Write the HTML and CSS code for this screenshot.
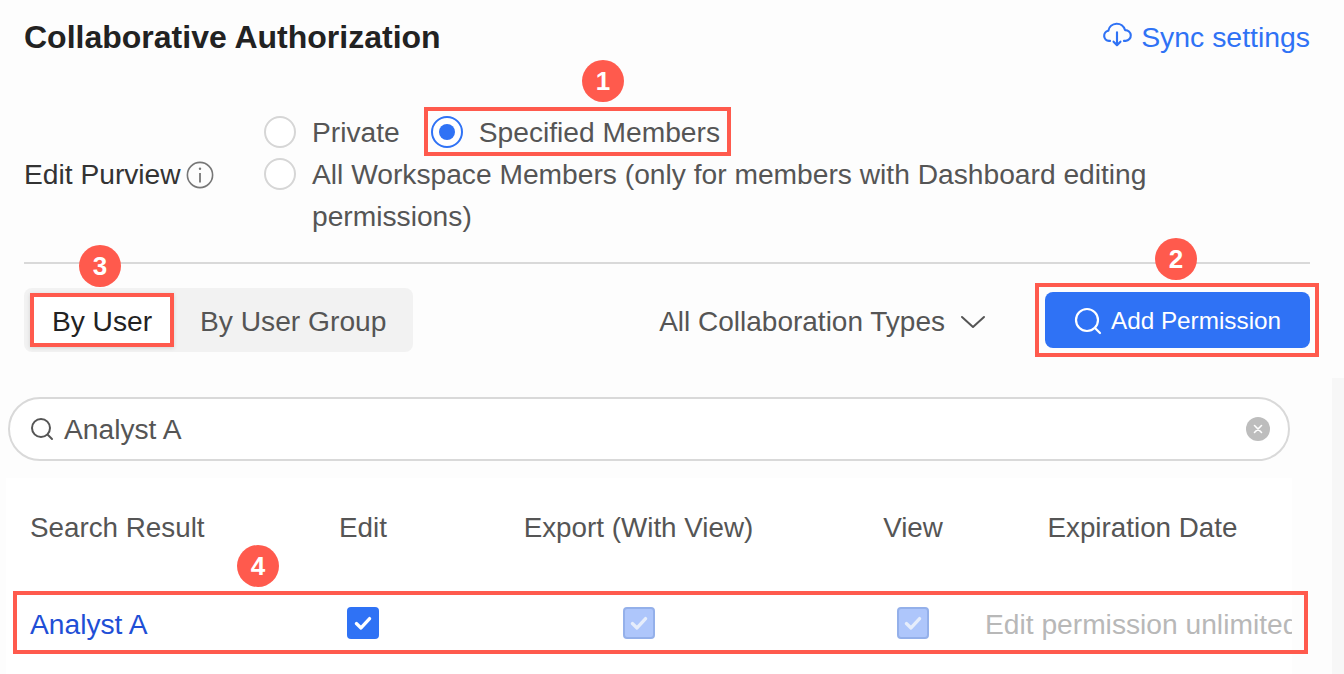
FILE: index.html
```html
<!DOCTYPE html>
<html lang="en">
<head>
<meta charset="utf-8">
<title>Collaborative Authorization</title>
<link rel="stylesheet" href="styles.css">
</head>
<body>
<main class="page">
  <header class="head">
    <h1 class="title">Collaborative Authorization</h1>
    <a class="sync">
      <svg class="sync-icon" viewBox="0 0 28 24" fill="none" stroke="#2f72f5" stroke-width="2" stroke-linecap="round" stroke-linejoin="round"><path d="M7.5 17.5H6.5a4.8 4.8 0 0 1-.6-9.5 8 8 0 0 1 15.6-.6 5 5 0 0 1 .6 10.1h-1.6"/><path d="M14 9.5v12M10.8 18.2l3.2 3.4 3.2-3.4"/></svg>
      Sync settings
    </a>
  </header>

  <section class="purview">
    <div class="purview-label">Edit Purview
      <svg class="info" viewBox="0 0 28 28" fill="none" stroke="#777" stroke-width="1.6"><circle cx="14" cy="14" r="12.6"/><path d="M14 12v9.5" stroke-width="1.8"/><circle cx="14" cy="7.8" r="1.2" fill="#777" stroke="none"/></svg>
    </div>
    <div class="options">
      <div class="opt-row">
        <span class="radio"></span><span class="opt-text">Private</span>
        <span class="radio on"></span><span class="opt-text">Specified Members</span>
      </div>
      <div class="opt-row wrap">
        <span class="radio"></span>
        <span class="opt-text long">All Workspace Members (only for members with Dashboard editing permissions)</span>
      </div>
    </div>
  </section>

  <hr class="rule">

  <section class="toolbar">
    <div class="tabs">
      <span class="tab active">By User</span>
      <span class="tab">By User Group</span>
    </div>
    <div class="types">All Collaboration Types
      <svg class="chev" viewBox="0 0 26 14" fill="none" stroke="#555" stroke-width="2" stroke-linecap="round" stroke-linejoin="round"><path d="M2 2l11 10L24 2"/></svg>
    </div>
    <button class="add">
      <svg class="add-icon" viewBox="0 0 28 28" fill="none" stroke="#fff" stroke-width="2.2" stroke-linecap="round"><circle cx="13" cy="13" r="11"/><path d="M21 21l5 5"/></svg>
      Add Permission
    </button>
  </section>

  <div class="search">
    <svg class="search-icon" viewBox="0 0 24 24" fill="none" stroke="#555" stroke-width="2" stroke-linecap="round"><circle cx="11" cy="11" r="9"/><path d="M18 18l4 4"/></svg>
    <span class="search-text">Analyst A</span>
    <span class="clear"><svg viewBox="0 0 10 10" stroke="#fff" stroke-width="1.6" stroke-linecap="round"><path d="M1.5 1.5l7 7M8.5 1.5l-7 7"/></svg></span>
  </div>

  <section class="table">
    <div class="grid grid-head">
      <span>Search Result</span>
      <span class="mid">Edit</span>
      <span class="mid">Export (With View)</span>
      <span class="mid view-col">View</span>
      <span class="mid exp-head">Expiration Date</span>
    </div>
    <div class="grid grid-row">
      <span class="name">Analyst A</span>
      <span class="mid"><span class="check"><svg viewBox="0 0 20 20" fill="none" stroke="#fff" stroke-width="3" stroke-linecap="round" stroke-linejoin="round"><path d="M4 10.5l4.2 4L16 6"/></svg></span></span>
      <span class="mid"><span class="check off"><svg viewBox="0 0 20 20" fill="none" stroke="#e6edfb" stroke-width="3" stroke-linecap="round" stroke-linejoin="round"><path d="M4 10.5l4.2 4L16 6"/></svg></span></span>
      <span class="mid view-col"><span class="check off"><svg viewBox="0 0 20 20" fill="none" stroke="#e6edfb" stroke-width="3" stroke-linecap="round" stroke-linejoin="round"><path d="M4 10.5l4.2 4L16 6"/></svg></span></span>
      <span class="expiry">Edit permission unlimited</span>
    </div>
  </section>
</main>

<div class="scroll-strip"></div>

<div class="mark mark-1"></div>
<div class="mark mark-2"></div>
<div class="mark mark-3"></div>
<div class="mark mark-4"></div>
<span class="badge badge-1">1</span>
<span class="badge badge-2">2</span>
<span class="badge badge-3">3</span>
<span class="badge badge-4">4</span>
</body>
</html>
```

FILE: styles.css
```css
* { box-sizing: border-box; }
html, body { margin: 0; height: 100%; }
body {
  background: #fdfdfd;
  font-family: "Liberation Sans", Arial, sans-serif;
  font-size: 28.2px;
  color: #555;
  overflow: hidden;
  position: relative;
}
.page { display: flex; flex-direction: column; width: 1344px; height: 674px; }

.head { display: flex; justify-content: space-between; align-items: center; height: 42px; margin: 17px 34px 0 24px; }
.title { margin: 0; font-size: 32px; font-weight: 700; color: #222; }
.sync { display: flex; align-items: center; gap: 9px; color: #2f72f5; font-size: 28.4px; }
.sync-icon { width: 30px; height: 26px; margin-top: -5px; }

.purview { display: flex; align-items: center; margin: 52px 34px 0 24px; height: 126px; }
.purview-label { display: flex; align-items: center; gap: 5px; width: 240px; padding-top: 2px; color: #333; }
.info { width: 28px; height: 28px; }
.options { display: flex; flex-direction: column; flex: 1; }
.opt-row { display: flex; min-height: 42px; align-items: center; }
.opt-row.wrap { align-items: flex-start; }
.radio { flex: none; width: 32px; height: 32px; border-radius: 50%; border: 2px solid #d6d6d6; background: #fff; position: relative; margin-right: 16px; }
.opt-row.wrap .radio { margin-top: 5px; }
.radio.on { border-color: #2f72f5; margin-left: 31px; }
.radio.on::after { content: ""; position: absolute; inset: 6px; border-radius: 50%; background: #2f72f5; }
.opt-text { line-height: 42px; }
.opt-text.long { max-width: 860px; }

.rule { border: 0; height: 2px; background: #d9d9d9; margin: 25px 34px 0 24px; }

.toolbar { display: flex; align-items: center; margin: 24px 34px 0 24px; height: 64px; }
.tabs { display: flex; width: 389px; height: 64px; padding: 5px 6px; background: #f2f2f2; border-radius: 8px; }
.tab { display: flex; align-items: center; justify-content: center; padding: 4px 0 0 26px; white-space: nowrap; }
.tab.active { width: 144px; padding: 4px 0 0; background: #fff; color: #222; box-shadow: 0 1px 4px rgba(0,0,0,.12); }
.types { display: flex; align-items: center; gap: 15px; margin-left: auto; margin-right: 59px; padding-top: 4px; font-size: 28px; }
.chev { width: 26px; height: 14px; }
.add { display: flex; align-items: center; justify-content: center; gap: 9px; width: 265px; height: 56px; padding: 2px 0 0; border: 0; border-radius: 8px; background: #2f72f5; color: #fff; font: 24.3px "Liberation Sans", Arial, sans-serif; }
.add-icon { width: 28px; height: 28px; }

.search { display: flex; align-items: center; width: 1282px; height: 64px; margin: 45px 0 0 8px; padding: 0 18px 0 20px; border: 2px solid #d9d9d9; border-radius: 32px; background: #fff; }
.search-icon { width: 24px; height: 24px; margin-right: 10px; }
.search-text { flex: 1; padding-top: 2px; }
.clear { display: flex; align-items: center; justify-content: center; width: 24px; height: 24px; border-radius: 50%; background: #bdbdbd; }
.clear svg { width: 10px; height: 10px; }

.table { margin: 17px 0 0 6px; width: 1286px; background: #fff; padding-left: 24px; height: 197px; }
.grid { display: grid; grid-template-columns: 195px 276px 275px 209px 307px; align-items: center; }
.grid-head { height: 100px; font-size: 27.8px; }
.grid-row { height: 94px; }
.mid { display: flex; justify-content: center; align-items: center; }
.view-col { padding-left: 65px; }
.exp-head { padding-left: 8px; white-space: nowrap; }
.name { color: #1f4fd6; }
.expiry { color: #b8b8b8; white-space: nowrap; overflow: hidden; }
.check { display: flex; width: 32px; height: 32px; margin-top: -4px; border-radius: 4px; background: #2f72f5; padding: 5px; }
.check.off { background: #aec6fb; border: 2px solid #94b0ea; padding: 3px; }
.check svg { width: 100%; height: 100%; }

.scroll-strip { position: absolute; left: 1332px; top: 378px; width: 12px; height: 296px; background: #f7f7f7; }

.mark { position: absolute; border: 4px solid #ff5a4d; }
.mark-1 { left: 424px; top: 107px; width: 307px; height: 49px; }
.mark-2 { left: 1035px; top: 283px; width: 284px; height: 74px; }
.mark-3 { left: 30px; top: 293px; width: 144px; height: 54px; }
.mark-4 { left: 13px; top: 591px; width: 1295px; height: 63px; }
.badge { position: absolute; width: 42px; height: 42px; border-radius: 50%; background: #ff5a4d; color: #fff; font-size: 26px; font-weight: 700; display: flex; align-items: center; justify-content: center; }
.badge-1 { left: 582px; top: 60px; }
.badge-2 { left: 1155px; top: 238px; }
.badge-3 { left: 79px; top: 245px; }
.badge-4 { left: 237px; top: 545px; }
```
